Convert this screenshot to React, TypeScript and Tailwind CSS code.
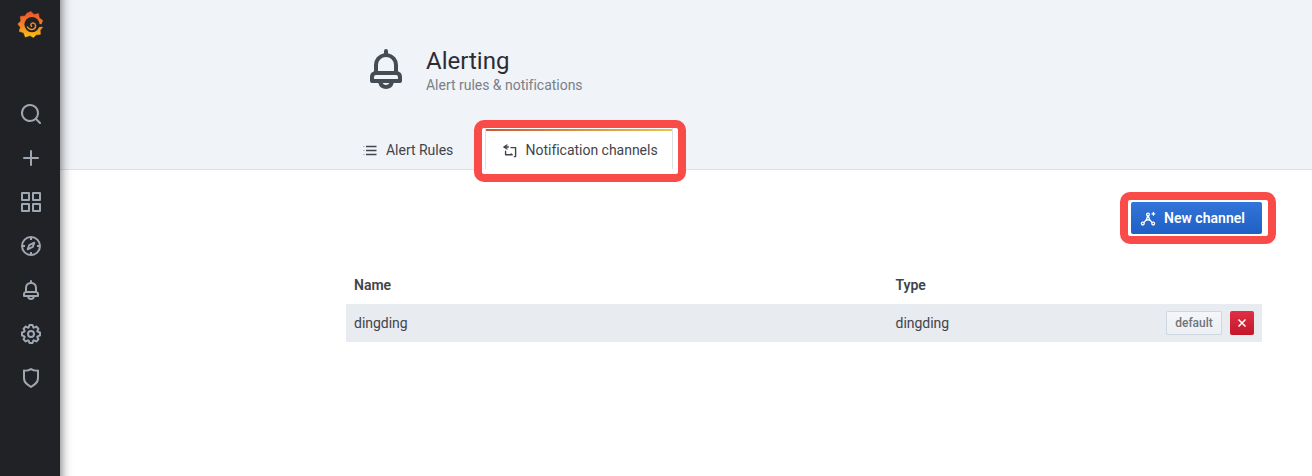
import React from 'react';

const bell =
  'M18,13.18V10a6,6,0,0,0-5-5.91V3a1,1,0,0,0-2,0V4.09A6,6,0,0,0,6,10v3.18A3,3,0,0,0,4,16v2a1,1,0,0,0,1,1H8.14a4,4,0,0,0,7.72,0H19a1,1,0,0,0,1-1V16A3,3,0,0,0,18,13.18ZM8,10a4,4,0,0,1,8,0v3H8Zm4,10a2,2,0,0,1-1.72-1h3.44A2,2,0,0,1,12,20Zm6-3H6V16a1,1,0,0,1,1-1H17a1,1,0,0,1,1,1Z';
const search =
  'M21.71,20.29,18,16.61A9,9,0,1,0,16.61,18l3.68,3.68a1,1,0,0,0,1.42,0A1,1,0,0,0,21.71,20.29ZM11,18a7,7,0,1,1,7-7A7,7,0,0,1,11,18Z';
const plus = 'M19,11H13V5a1,1,0,0,0-2,0v6H5a1,1,0,0,0,0,2h6v6a1,1,0,0,0,2,0V13h6a1,1,0,0,0,0-2Z';
const apps =
  'M10,13H3a1,1,0,0,0-1,1v7a1,1,0,0,0,1,1h7a1,1,0,0,0,1-1V14A1,1,0,0,0,10,13ZM9,20H4V15H9ZM21,2H14a1,1,0,0,0-1,1v7a1,1,0,0,0,1,1h7a1,1,0,0,0,1-1V3A1,1,0,0,0,21,2ZM20,9H15V4h5Zm1,4H14a1,1,0,0,0-1,1v7a1,1,0,0,0,1,1h7a1,1,0,0,0,1-1V14A1,1,0,0,0,21,13Zm-1,7H15V15h5ZM10,2H3A1,1,0,0,0,2,3v7a1,1,0,0,0,1,1h7a1,1,0,0,0,1-1V3A1,1,0,0,0,10,2ZM9,9H4V4H9Z';
const cog =
  'M21.32,9.55l-1.89-.63.89-1.78A1,1,0,0,0,20.13,6L18,3.87a1,1,0,0,0-1.15-.19l-1.78.89-.63-1.89A1,1,0,0,0,13.5,2h-3a1,1,0,0,0-.95.68L8.92,4.57,7.14,3.68A1,1,0,0,0,6,3.87L3.87,6a1,1,0,0,0-.19,1.15l.89,1.78-1.89.63A1,1,0,0,0,2,10.5v3a1,1,0,0,0,.68.95l1.89.63-.89,1.78A1,1,0,0,0,3.87,18L6,20.13a1,1,0,0,0,1.15.19l1.78-.89.63,1.89a1,1,0,0,0,.95.68h3a1,1,0,0,0,.95-.68l.63-1.89,1.78.89A1,1,0,0,0,18,20.13L20.13,18a1,1,0,0,0,.19-1.15l-.89-1.78,1.89-.63A1,1,0,0,0,22,13.5v-3A1,1,0,0,0,21.32,9.55ZM20,12.78l-1.2.4A2,2,0,0,0,17.64,16l.57,1.14-1.1,1.1L16,17.64a2,2,0,0,0-2.79,1.16l-.4,1.2H11.22l-.4-1.2A2,2,0,0,0,8,17.64l-1.14.57-1.1-1.1L6.36,16A2,2,0,0,0,5.2,13.18L4,12.78V11.22l1.2-.4A2,2,0,0,0,6.36,8L5.79,6.89l1.1-1.1L8,6.36A2,2,0,0,0,10.82,5.2l.4-1.2h1.56l.4,1.2A2,2,0,0,0,16,6.36l1.14-.57,1.1,1.1L17.64,8a2,2,0,0,0,1.16,2.79l1.2.4ZM12,8a4,4,0,1,0,4,4A4,4,0,0,0,12,8Zm0,6a2,2,0,1,1,2-2A2,2,0,0,1,12,14Z';
const shield =
  'M19.63,3.65a1,1,0,0,0-.84-.2,8,8,0,0,1-6.22-1.27,1,1,0,0,0-1.14,0A8,8,0,0,1,5.21,3.45a1,1,0,0,0-.84.2A1,1,0,0,0,4,4.43v7.45a9,9,0,0,0,3.77,7.33l3.65,2.6a1,1,0,0,0,1.16,0l3.65-2.6A9,9,0,0,0,20,11.88V4.43A1,1,0,0,0,19.63,3.65ZM18,11.88a7,7,0,0,1-2.93,5.7L12,19.77,8.93,17.58A7,7,0,0,1,6,11.88V5.58a10,10,0,0,0,6-1.39,10,10,0,0,0,6,1.39Z';

function Glyph({ d, className }: { d: string; className: string }) {
  return (
    <svg viewBox="0 0 24 24" fill="currentColor" className={className}>
      <path d={d} />
    </svg>
  );
}

function Logo() {
  return (
    <svg viewBox="0 0 28 28" className="mt-[11px] size-7">
      <defs>
        <linearGradient id="flame" gradientUnits="userSpaceOnUse" x1="0" y1="0" x2="0" y2="27">
          <stop offset="0.1" stopColor="#f05a2b" />
          <stop offset="0.6" stopColor="#f68b22" />
          <stop offset="1" stopColor="#fbca0a" />
        </linearGradient>
      </defs>
      <path
        d="M13.8.4l3.2 3 4.6-.8.6 4.2 3.5 2.6-1.4 3.6 1.2 3.6-2.3 2.6.2 4.1-4.2.5-2.8 2.6-3.4-1.8-4.7 1.5-1.7-4.3-4.4-1.5 1.2-4L.8 13l3-3-.5-4.6 4.6-.4 2-2.7z"
        fill="url(#flame)"
        stroke="url(#flame)"
        strokeWidth=".5"
        strokeLinejoin="round"
      />
      <circle cx="15" cy="13.6" r="7.6" fill="#212226" />
      <path d="M21 13l5.4.2v2.4l-5 .6z" fill="#212226" />
      <path
        d="M14.6 15.3C13 14.2 14 11.7 16.2 12c2.9.5 3.2 4.3.9 5.8-2.2 1.4-5.4.6-6.6-1.8"
        fill="none"
        stroke="url(#flame)"
        strokeWidth="1.5"
        strokeLinecap="round"
      />
    </svg>
  );
}

function Compass() {
  return (
    <svg viewBox="0 0 24 24" fill="none" stroke="currentColor" strokeWidth="2" strokeLinejoin="round" className="size-6">
      <circle cx="12" cy="12" r="9" />
      <path d="M12 3v3M12 18v3M3 12h3M18 12h3" />
      <path d="M15.3 8.7l-1.5 4.2-5.1 2.4 1.5-4.2z" strokeWidth="1.9" />
    </svg>
  );
}

function ListIcon() {
  return (
    <svg viewBox="0 0 16 16" className="size-4" fill="none" stroke="currentColor">
      <path d="M4 4.5h10.5M4 8.5h10.5M4 12.5h10.5" strokeWidth="1.5" />
      <path d="M1.3 4.5h1.2M1.3 8.5h1.2M1.3 12.5h1.2" strokeWidth="1.2" opacity=".5" />
    </svg>
  );
}

function ChannelsIcon() {
  return (
    <svg viewBox="0 0 16 16" className="size-4" fill="none" stroke="currentColor" strokeWidth="1.4" strokeLinecap="round" strokeLinejoin="round">
      <path d="M5 3L1.8 5 5 7M2.4 5h4" />
      <path d="M9 5.6h4.6v9h-1.2M3.6 9.2v3.6h6.6M9.2 12l1 .8" />
    </svg>
  );
}

function AddChannelIcon() {
  return (
    <svg viewBox="0 0 16 16" className="size-4" fill="none" stroke="currentColor" strokeWidth="1.3" strokeLinecap="round">
      <circle cx="8" cy="4.6" r="1.4" />
      <circle cx="2.8" cy="13.6" r="1.4" />
      <circle cx="13.2" cy="13.6" r="1.4" />
      <path d="M7.6 6.2L6.4 9.4M8.4 6.2l1.2 3.2M6.2 9.8l-2.2 2.6M9.8 9.8l2.2 2.6M6.2 10.4L8 9.6l1.8.8M13.4 2.4v2.8M12 3.8h2.8" />
    </svg>
  );
}

export default function App() {
  return (
    <div className="flex h-[476px] w-[1312px] overflow-hidden bg-white font-['Roboto',sans-serif] text-sm tracking-[-0.02px] text-[#41444b]">
      <nav className="z-10 -my-4 flex w-[60px] shrink-0 flex-col items-center bg-[#212226] pt-4 pl-0.5 text-[#9fa7b3] shadow-[0_0_11px_rgba(0,0,0,0.65)]">
        <Logo />
        <div className="mt-[63px] flex flex-col gap-5">
          <Glyph d={search} className="size-6" />
          <Glyph d={plus} className="size-6" />
          <Glyph d={apps} className="size-6" />
          <Compass />
          <Glyph d={bell} className="size-6" />
          <Glyph d={cog} className="size-6" />
          <Glyph d={shield} className="size-6" />
        </div>
      </nav>

      <main className="min-w-0 flex-1">
        <header className="flex h-[170px] flex-col justify-between border-b border-[#dce1e6] bg-[#f0f3f8] pl-[286px]">
          <div className="flex pt-[45px]">
            <Glyph d={bell} className="ml-4 size-12 text-[#464c54]" />
            <div className="ml-4 pt-px">
              <h1 className="text-2xl leading-[30px] tracking-normal text-[#2b2d33]">Alerting</h1>
              <div className="leading-[18px] text-[#7b8087]">Alert rules &amp; notifications</div>
            </div>
          </div>
          <div className="-mb-[13px] flex items-start">
            <div className="mt-[21px] flex w-32 items-center gap-2 pl-4 leading-[18px]">
              <ListIcon />
              <span>Alert Rules</span>
            </div>
            <div className="h-[62px] w-[212px] rounded-[10px] border-8 border-[#f94b48] bg-white">
              <div className="mr-[5px] ml-[3px] flex h-[41px] flex-col border-x border-[#dce1e6]">
                <div className="mt-px h-0.5 bg-linear-to-r from-[#c65a3a] to-[#e7c34d]" />
                <div className="flex items-center gap-2 pt-2.5 pl-[15.5px] leading-[18px] whitespace-nowrap">
                  <ChannelsIcon />
                  <span>Notification channels</span>
                </div>
              </div>
            </div>
          </div>
        </header>

        <section className="pt-[22px] pl-[286px]">
          <div className="ml-[774px] flex h-[52px] w-[156px] rounded-[10px] border-8 border-[#f94b48] pt-0.5 pl-[3px]">
            <button className="flex h-8 w-[131px] items-center gap-2 rounded-[2px] bg-linear-to-b from-[#3274d9] to-[#1f60c4] pl-[9px] font-semibold tracking-[0.03px] text-white">
              <AddChannelIcon />
              <span>New channel</span>
            </button>
          </div>
          <table className="mt-[22px] w-[916px] table-fixed text-left">
            <thead>
              <tr className="h-[38px]">
                <th className="w-[541.5px] px-2 font-semibold">Name</th>
                <th className="w-[200px] px-2 font-semibold">Type</th>
                <th />
              </tr>
            </thead>
            <tbody>
              <tr className="h-[38px] bg-[#e8ebf0]">
                <td className="px-2">dingding</td>
                <td className="px-2">dingding</td>
                <td>
                  <div className="flex justify-end gap-2 pr-2">
                    <button className="h-6 w-14 rounded-[2px] border border-[#cfd7e0] bg-linear-to-b from-[#f4f6f9] to-[#eceff3] text-xs font-medium text-[#6f747b]">
                      default
                    </button>
                    <button className="flex size-6 items-center justify-center rounded-[2px] bg-linear-to-b from-[#e02f44] to-[#c4162a] text-white">
                      <svg viewBox="0 0 10 10" className="size-2.5" stroke="currentColor" strokeWidth="1.5">
                        <path d="M1.5 1.5l7 7M8.5 1.5l-7 7" />
                      </svg>
                    </button>
                  </div>
                </td>
              </tr>
            </tbody>
          </table>
        </section>
      </main>
    </div>
  );
}
